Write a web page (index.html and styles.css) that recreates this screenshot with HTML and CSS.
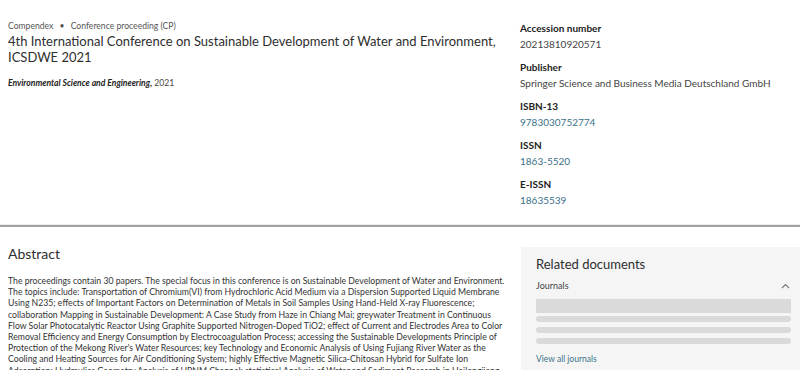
FILE: index.html
```html
<!DOCTYPE html>
<html>
<head>
	<title>4th International Conference on Sustainable Development of Water and Environment</title>
	<meta name="viewport" content="width=device-width,initial-scale=1">
	<link rel="stylesheet" href="styles.css">
</head>
<body>

	<div class="record">
		<div class="main">
			<div class="meta">Compendex <span class="dot">&bull;</span> Conference proceeding (CP)</div>
			<h1>4th International Conference on Sustainable Development of Water and Environment, ICSDWE 2021</h1>
			<div class="source"><b><i>Environmental Science and Engineering</i>,</b> 2021</div>
		</div>
		<div class="details">
			<div class="item">
				<div class="label">Accession number</div>
				<div class="value">20213810920571</div>
			</div>
			<div class="item">
				<div class="label">Publisher</div>
				<div class="value">Springer Science and Business Media Deutschland GmbH</div>
			</div>
			<div class="item">
				<div class="label">ISBN-13</div>
				<div class="value link">9783030752774</div>
			</div>
			<div class="item">
				<div class="label">ISSN</div>
				<div class="value link">1863-5520</div>
			</div>
			<div class="item">
				<div class="label">E-ISSN</div>
				<div class="value link">18635539</div>
			</div>
		</div>
	</div>

	<div class="lower">
		<div class="abstract">
			<h2>Abstract</h2>
			<p>The proceedings contain 30 papers. The special focus in this conference is on Sustainable Development of Water and Environment. The topics include: Transportation of Chromium(VI) from Hydrochloric Acid Medium via a Dispersion Supported Liquid Membrane Using N235; effects of Important Factors on Determination of Metals in Soil Samples Using Hand-Held X-ray Fluorescence; collaboration Mapping in Sustainable Development: A Case Study from Haze in Chiang Mai; greywater Treatment in Continuous Flow Solar Photocatalytic Reactor Using Graphite Supported Nitrogen-Doped TiO2; effect of Current and Electrodes Area to Color Removal Efficiency and Energy Consumption by Electrocoagulation Process; accessing the Sustainable Developments Principle of Protection of the Mekong River's Water Resources; key Technology and Economic Analysis of Using Fujiang River Water as the Cooling and Heating Sources for Air Conditioning System; highly Effective Magnetic Silica-Chitosan Hybrid for Sulfate Ion Adsorption; Hydraulics Geometry Analysis of HPNM Channel; statistical Analysis of Water and Sediment Research in Heilongjiang River Basin.</p>
		</div>
		<div class="related">
			<h3>Related documents</h3>
			<div class="toggle">
				<span>Journals</span>
				<svg width="9" height="6" viewBox="0 0 9 6"><path d="M1 5 L4.5 1.5 L8 5" fill="none" stroke="#777" stroke-width="1.1"/></svg>
			</div>
			<div class="skeleton">
				<div class="bar big"></div>
				<div class="bar"></div>
				<div class="bar"></div>
				<div class="bar"></div>
			</div>
			<div class="view-all">View all journals</div>
		</div>
	</div>

</body>
</html>
```

FILE: styles.css
```css
*{
	box-sizing: border-box;
	padding: 0;
	margin: 0;
}

html, body{
	height: 100%;
	overflow: hidden;
}

body{
	font-family: Lato, "Open Sans", sans-serif;
	color: #333;
	background: #fff;
}

.record{
	display: grid;
	grid-template-columns: 500px 1fr;
	column-gap: 12px;
	padding: 20px 0 17px 8px;
	border-bottom: 2px solid #a3a3a3;
	box-shadow: 0 -1px 0 #ececec inset;
}

.meta{
	font-size: 8.6px;
	line-height: 14px;
	color: #555;
	margin-top: -1px;
}
.meta .dot{
	margin: 0 4px;
}

h1{
	font-size: 13px;
	font-weight: normal;
	line-height: 16px;
	color: #2e2e2e;
}

.source{
	font-size: 8.6px;
	line-height: 12px;
	margin-top: 12px;
	color: #444;
}
.source b{
	color: #222;
}

.details .item{
	margin-bottom: 7px;
}
.details .item:last-child{
	margin-bottom: 0;
}
.details .label{
	font-size: 10px;
	font-weight: bold;
	line-height: 16px;
	color: #222;
}
.details .value{
	font-size: 10px;
	line-height: 16px;
	color: #444;
}
.details .link{
	color: #3a7189;
}

.lower{
	display: grid;
	grid-template-columns: 500px 1fr;
	column-gap: 13px;
	padding: 20px 0 0 8px;
	align-items: start;
}

h2{
	font-size: 14px;
	font-weight: normal;
	line-height: 14px;
	color: #2e2e2e;
}

.abstract p{
	font-size: 8.7px;
	line-height: 11.2px;
	margin-top: 14px;
	color: #333;
}

.related{
	background: #f5f5f5;
	padding: 9px 9px 20px 15px;
}

h3{
	font-size: 13px;
	font-weight: normal;
	line-height: 16px;
	color: #2e2e2e;
}

.toggle{
	display: flex;
	justify-content: space-between;
	align-items: center;
	margin-top: 7px;
	font-size: 9px;
	line-height: 14px;
	color: #444;
}
.toggle svg{
	margin-right: 1px;
}

.skeleton{
	margin-top: 6px;
	display: flex;
	flex-direction: column;
	gap: 5px;
}
.skeleton .bar{
	height: 6px;
	background: #dadada;
	border-radius: 3px;
}
.skeleton .bar.big{
	height: 14px;
	border-radius: 0;
	margin-bottom: -2px;
}

.view-all{
	margin-top: 9px;
	font-size: 8.5px;
	line-height: 12px;
	color: #3a7189;
}
```
